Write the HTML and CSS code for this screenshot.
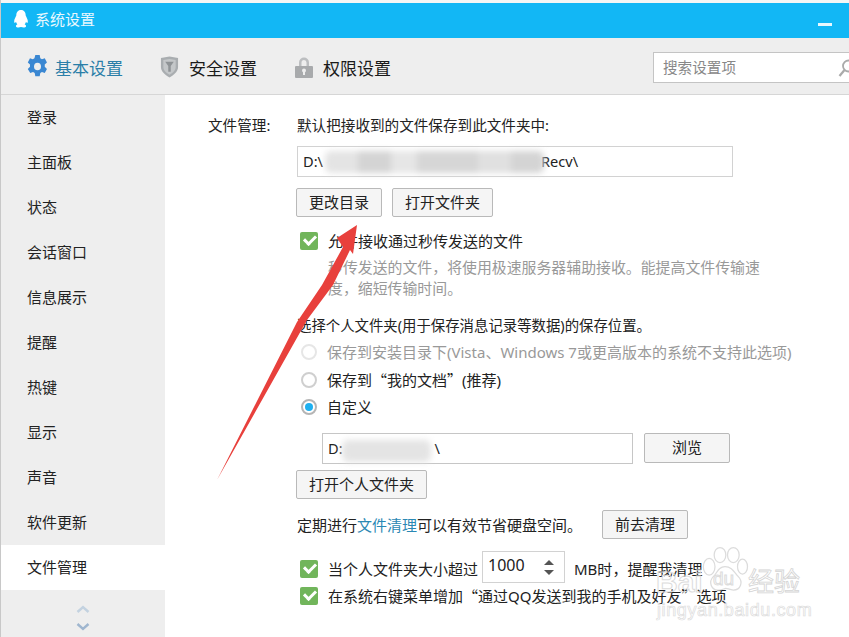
FILE: index.html
```html
<!DOCTYPE html>
<html lang="zh-CN">
<head>
<meta charset="utf-8">
<title>系统设置</title>
<link rel="stylesheet" href="styles.css">
</head>
<body>
<div class="window">
  <div class="strip"></div>
  <header class="titlebar">
    <svg class="qq" viewBox="0 0 16 18"><path d="M8 0C4.600 0 3.400 2.600 3.300 5.400 2.600 7 1.400 9 1.200 11c-.1 1.300.3 2 .6 2 .4 0 .9-.6 1.200-1.200.2 1 .7 1.900 1.400 2.500C3.400 14.800 2.700 15.500 3 16.400 3.400 17.400 5.500 17.800 8 17c2.500.8 4.600.4 5-.6.3-.9-.4-1.600-1.400-2.100.7-.6 1.200-1.500 1.400-2.500.3.6.8 1.200 1.200 1.200.3 0 .7-.7.6-2-.2-2-1.400-4-2.100-5.600C12.600 2.600 11.400 0 8 0z"/></svg>
    <span class="title-text">系统设置</span>
    <span class="minimize"></span>
  </header>
  <nav class="toolbar">
    <div class="tab active">
      <svg class="tab-icon gear" viewBox="0 0 24 24" preserveAspectRatio="none"><path fill-rule="evenodd" d="M9.500 0h5l.7 3.300 1.900 1.100 3.200-1 2.500 4.300-2.500 2.300v2.200l2.500 2.300-2.500 4.300-3.200-1-1.900 1.100-.7 3.300h-5l-.7-3.300-1.900-1.100-3.200 1L.9 14.500l2.500-2.300V10L.9 7.700l2.500-4.300 3.200 1 1.900-1.100zM12 8a4 4 0 1 0 0 8 4 4 0 0 0 0-8z"/></svg>
      <span class="tab-text">基本设置</span>
    </div>
    <div class="tab">
      <svg class="tab-icon shield" viewBox="0 0 20 22"><path d="M1 1.500 10 0l9 1.500V11c0 5-4.500 8.500-9 11-4.500-2.500-9-6-9-11z" fill="#a9adb0"/><path d="M3.500 3.500 10 2.500l6.500 1V11c0 3.600-3.200 6.200-6.500 8.200C6.700 17.200 3.500 14.600 3.500 11z" fill="#c4c7c9"/><path d="M5.500 5.500h9L11.300 10v6H8.700v-6z" fill="#8f9396"/></svg>
      <span class="tab-text">安全设置</span>
    </div>
    <div class="tab">
      <svg class="tab-icon lock" viewBox="0 0 18 21"><path d="M4 9V5.500a5 5 0 0 1 10 0V9h-2.500V5.500a2.500 2.500 0 0 0-5 0V9z" fill="#bcbec0"/><rect x="0" y="9" width="18" height="12" rx="1" fill="#a8aaac"/><circle cx="9" cy="13.500" r="2" fill="#eee"/><rect x="8" y="13.500" width="2" height="4.500" fill="#eee"/></svg>
      <span class="tab-text">权限设置</span>
    </div>
    <div class="search">
      <span>搜索设置项</span>
      <svg class="magnifier" viewBox="0 0 18 18"><circle cx="10.500" cy="7" r="5.500" fill="none" stroke="#aaa" stroke-width="1.800"/><path d="M6.500 11 1.500 17" stroke="#aaa" stroke-width="2.200"/></svg>
    </div>
  </nav>
  <div class="content">
    <aside class="sidebar">
      <ul class="menu">
        <li>登录</li>
        <li>主面板</li>
        <li>状态</li>
        <li>会话窗口</li>
        <li>信息展示</li>
        <li>提醒</li>
        <li>热键</li>
        <li>显示</li>
        <li>声音</li>
        <li>软件更新</li>
        <li class="selected">文件管理</li>
      </ul>
      <div class="scroller">
        <svg viewBox="0 0 14 8" class="chev up"><path d="M1.500 7 7 2l5.500 5" fill="none" stroke-width="2.400"/></svg>
        <svg viewBox="0 0 14 8" class="chev down"><path d="M1.500 1 7 6l5.500-5" fill="none" stroke-width="2.400"/></svg>
      </div>
    </aside>
    <main class="main">
      <div class="section-label">文件管理:</div>
      <div class="section">
        <div class="line">默认把接收到的文件保存到此文件夹中:</div>
        <div class="field wide">D:\<i class="recv">Recv\</i><i class="smudge smudge-a"></i></div>
        <div class="button-row">
          <button class="btn w86">更改目录</button>
          <button class="btn w101">打开文件夹</button>
        </div>
        <label class="option m14"><i class="check"></i>允许接收通过秒传发送的文件</label>
        <p class="hint">秒传发送的文件&#xFF0C;将使用极速服务器辅助接收。能提高文件传输速<br>度&#xFF0C;缩短传输时间。</p>
        <div class="line choose">选择个人文件夹(用于保存消息记录等数据)的保存位置。</div>
        <label class="option m6 disabled"><i class="radio"></i>保存到安装目录下(Vista、Windows 7或更高版本的系统不支持此选项)</label>
        <label class="option m8"><i class="radio"></i>保存到<span class="q">“</span>我的文档<span class="q">”</span>(推荐)</label>
        <label class="option m7"><i class="radio on"></i>自定义</label>
        <div class="path-row">
          <div class="field narrow">D:<i class="tail">\</i><i class="smudge smudge-b"></i></div>
          <button class="btn w86 tall">浏览</button>
        </div>
        <button class="btn w131 m6 block">打开个人文件夹</button>
        <div class="clean-row">
          <span class="clean-text">定期进行<a class="link">文件清理</a>可以有效节省硬盘空间。</span>
          <button class="btn w86">前去清理</button>
        </div>
        <div class="option spin-row">
          <i class="check"></i>当个人文件夹大小超过
          <span class="spinner"><span>1000</span><span class="spin-arrows"><i class="tri-up"></i><i class="tri-down"></i></span></span>
          <span class="mb">MB时<span class="q">&#xFF0C;</span>提醒我清理</span>
        </div>
        <label class="option m3"><i class="check"></i>在系统右键菜单增加<span class="q">“</span>通过QQ发送到我的手机及好友<span class="q">”</span>选项</label>
      </div>
    </main>
  </div>
  <svg class="arrow" viewBox="0 0 849 637"><polygon points="357,225 353,254 350,250 333,285 307,320 217,480 297,322 322,285 343,247 337,238"/></svg>
  <div class="watermark">
    <svg class="paw" viewBox="0 0 60 56"><g fill="none" stroke="#dcdcdc" stroke-width="1.500"><ellipse cx="11" cy="24" rx="7" ry="10"/><ellipse cx="24" cy="10" rx="7" ry="9"/><ellipse cx="40" cy="10" rx="7" ry="9"/><ellipse cx="51" cy="24" rx="6" ry="9"/><path d="M30 24c-8 0-9 7-14 12-6 6-3 17 7 16 4 0 6-2 8-2s5 2 9 2c9 0 12-10 6-16-5-5-7-12-16-12z"/></g></svg>
    <span class="wm-bai">Bai</span><span class="wm-du">du</span><span class="wm-jy">经验</span>
    <span class="wm-url">jingyan.baidu.com</span>
  </div>
</div>
</body>
</html>
```

FILE: styles.css
```css
* { box-sizing: border-box; }
html, body { margin: 0; padding: 0; height: 637px; overflow: hidden; background: #fff; }
body { font-family: "Noto Sans", "Noto Sans CJK SC", sans-serif; font-size: 15px; line-height: 20px; color: #222; }
.window { position: relative; width: 849px; height: 637px; display: flex; flex-direction: column; overflow: hidden; border-left: 1px solid #c8c8c8; }
.strip { height: 3px; background: #f4f6f5; flex: none; }
.titlebar { height: 35px; flex: none; background: #12b7f5; display: flex; align-items: center; padding: 0 0 4px 12px; color: #fff; }
.qq { width: 16px; height: 18px; fill: #fff; margin-right: 6px; }
.title-text { font-size: 15px; color: #e8f8fe; }
.minimize { width: 14px; height: 3px; background: #e8f8fe; margin-left: auto; margin-right: 17px; margin-top: 11px; }
.toolbar { height: 57px; flex: none; background: #eeeeee; border-bottom: 1px solid #d6d6d6; display: flex; align-items: center; padding-left: 26px; font-size: 17px; color: #1a1a1a; }
.tab { display: flex; align-items: center; margin-right: 38px; }
.tab.active { color: #2a7ea8; margin-right: 37px; }
.tab-text { padding-top: 5px; }
.tab-icon { flex: none; }
.gear { width: 21px; height: 23px; fill: #3a87d2; margin-right: 7px; }
.shield { width: 19px; height: 22px; margin-right: 10px; margin-top: 2px; }
.lock { width: 18px; height: 21px; margin-right: 10px; margin-top: 3px; }
.search { margin-left: auto; width: 196px; height: 31px; flex: none; background: #fff; border: 1px solid #c4c4c4; border-right: none; display: flex; align-items: center; padding: 0 0 2px 9px; font-size: 14.600px; color: #888; position: relative; margin-top: 3px; }
.magnifier { position: absolute; left: 184px; top: 6px; width: 18px; height: 18px; }
.content { flex: 1; display: flex; min-height: 0; }
.sidebar { width: 164px; flex: none; background: #eeeeee; display: flex; flex-direction: column; }
.menu { list-style: none; margin: 0; padding: 0; }
.menu li { height: 45px; line-height: 45px; padding-left: 26px; font-size: 15px; }
.menu li.selected { background: #fff; }
.scroller { flex: 1; display: flex; flex-direction: column; align-items: center; padding-top: 15px; gap: 10px; }
.chev { width: 14px; height: 8px; display: block; }
.chev.up { stroke: #c3d2e0; }
.chev.down { stroke: #9fb6cf; }
.main { flex: 1; display: flex; padding: 20px 0 0 43px; min-width: 0; }
.section-label { width: 89px; flex: none; font-size: 14.600px; line-height: 20px; }
.section { flex: 1; min-width: 0; }
.line { height: 20px; line-height: 20px; white-space: nowrap; font-size: 14.600px; }
.choose { margin-top: 18px; font-size: 14.400px; }
.m14 { margin-top: 14px; }
.m8 { margin-top: 8px; }
.m7 { margin-top: 7px; }
.m6 { margin-top: 6px; }
.m3 { margin-top: 3px; }
.field { position: relative; height: 31px; line-height: 29px; border: 1px solid #d2d2d2; padding-left: 5px; background: #fff; white-space: nowrap; font-size: 14.600px; }
.field i { font-style: normal; }
.wide { width: 436px; margin-top: 11px; }
.narrow { width: 311px; margin-left: 25px; border-color: #c6c6c6; }
.recv { margin-left: 218px; }
.tail { margin-left: 92px; }
.smudge { position: absolute; filter: blur(3px); border-radius: 6px; }
.smudge-a { left: 27px; top: 4px; width: 219px; height: 22px; background: linear-gradient(90deg, #e4e4e4 0 15%, #d4d4d4 15% 30%, #e6e6e6 30% 42%, #d6d6d6 42% 70%, #e0e0e0 70% 85%, #d4d4d4 85%); }
.smudge-b { left: 19px; top: 6px; width: 89px; height: 22px; background: #e4e4e4; }
.button-row { display: flex; gap: 10px; margin: 11px 0 0 -1px; }
.btn { height: 29px; padding: 0 0 2px; font: inherit; line-height: 20px; color: #222; background: #f5f5f5; border: 1px solid #b9b9b9; border-radius: 2px; }
.w86 { width: 86px; }
.w101 { width: 101px; }
.w131 { width: 131px; }
.tall { height: 30px; flex: none; }
.block { display: block; margin-left: -1px; }
.option { display: flex; align-items: center; height: 20px; white-space: nowrap; padding: 0 0 0 3px; }
.check { width: 18px; height: 18px; flex: none; margin: 0 10px 0 0; border-radius: 2px; background: #71b55b; position: relative; }
.check::after { content: ""; position: absolute; left: 4px; top: 3px; width: 9px; height: 5px; border-left: 3px solid #fff; border-bottom: 3px solid #fff; transform: rotate(-45deg); }
.radio { width: 16px; height: 16px; flex: none; margin: 0 10px 0 1px; border-radius: 50%; border: 2px solid #cfcfcf; background: #fff; position: relative; }
.q { font-family: "Noto Sans CJK SC", sans-serif; }
.disabled { color: #999; }
.disabled .radio { border-color: #e6e6e6; }
.radio.on { border-color: #b5b5b5; }
.radio.on::after { content: ""; position: absolute; left: 2px; top: 2px; width: 8px; height: 8px; border-radius: 50%; background: #1fb0f0; }
.hint { margin: 5px 0 0 31px; font-family: "Noto Sans CJK SC", sans-serif; font-size: 14.900px; line-height: 21px; color: #999; white-space: nowrap; }
.path-row { display: flex; gap: 11px; margin-top: 16px; height: 31px; }
.clean-row { display: flex; align-items: center; margin: 11px 0 0 0; }
.clean-text { width: 305px; flex: none; white-space: nowrap; line-height: 20px; }
.link { color: #2a88b4; }
.spin-row { height: 32px; margin-top: 12px; padding-top: 4px; }
.spinner { width: 83px; height: 32px; flex: none; margin: -4px 0 0 4px; border: 1px solid #d2d2d2; display: flex; align-items: center; justify-content: space-between; padding: 0 10px 4px 5px; font-size: 16px; background: #fff; }
.spin-arrows { display: flex; flex-direction: column; gap: 5px; margin-top: 4px; }
.spin-arrows i { display: block; width: 0; height: 0; border-left: 5px solid transparent; border-right: 5px solid transparent; }
.tri-up { border-bottom: 5px solid #555; }
.tri-down { border-top: 5px solid #555; }
.mb { margin-left: 9px; }
.arrow { position: absolute; left: -1px; top: 0; width: 849px; height: 637px; pointer-events: none; }
.arrow polygon { fill: #e8403c; }
.watermark { position: absolute; left: 620px; top: 545px; width: 229px; height: 92px; pointer-events: none; color: transparent; -webkit-text-stroke: 1px #dcdcdc; font-family: "Liberation Sans", sans-serif; }
.paw { position: absolute; left: 79px; top: 0; width: 50px; height: 50px; }
.wm-bai { position: absolute; left: 35px; top: 22px; font-size: 30px; line-height: 30px; font-weight: bold; }
.wm-du { position: absolute; left: 92px; top: 23px; font-size: 19px; line-height: 22px; }
.wm-jy { position: absolute; left: 127px; top: 20px; font-size: 26px; line-height: 30px; font-family: "Noto Sans CJK SC", sans-serif; -webkit-text-stroke: .8px #d4d4d4; }
.wm-url { position: absolute; left: 36px; top: 54px; font-size: 18px; line-height: 22px; letter-spacing: .6px; white-space: nowrap; -webkit-text-stroke: .7px #dcdcdc; }
```
